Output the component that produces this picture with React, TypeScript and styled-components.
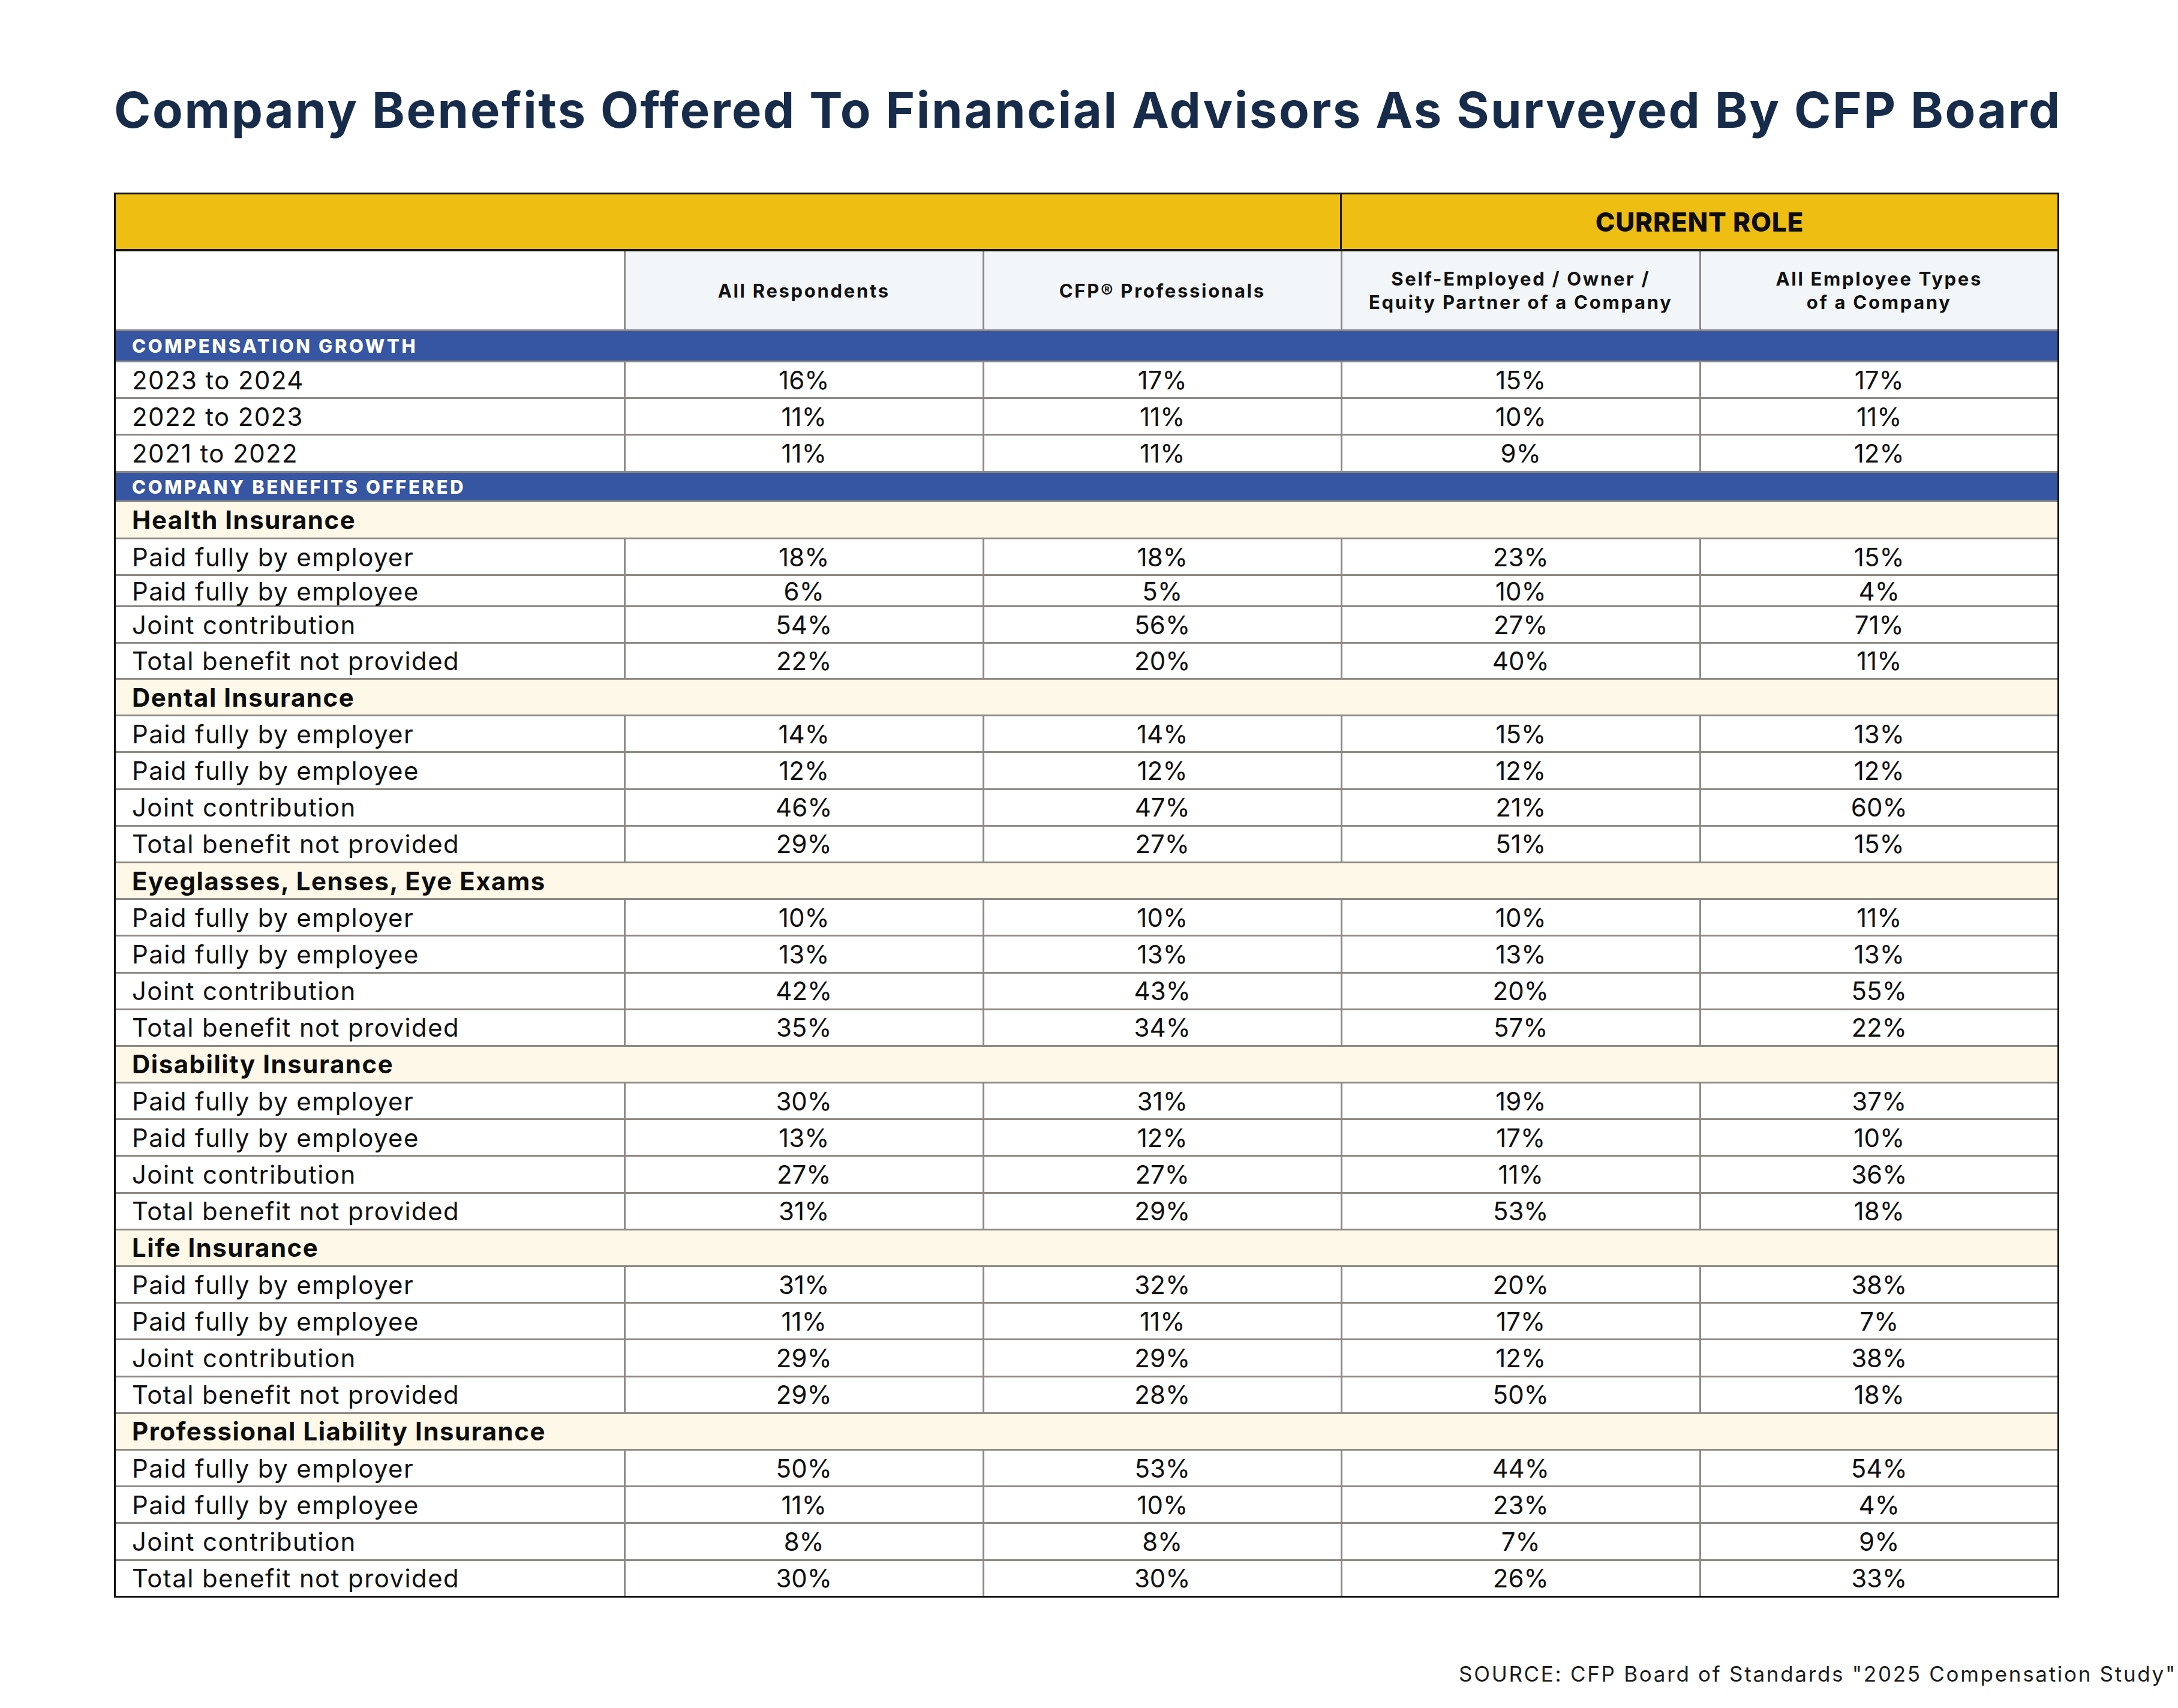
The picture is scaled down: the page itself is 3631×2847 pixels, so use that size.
import React from 'react';
import styled, { createGlobalStyle } from 'styled-components';

const GlobalStyle = createGlobalStyle`
  html, body {
    margin: 0;
    padding: 0;
    background: #ffffff;
  }
  body {
    font-family: Inter, 'Open Sans', 'Liberation Sans', sans-serif;
    color: #111111;
  }
`;

const LINE = '#8d8984';

const Page = styled.div`
  width: 3631px;
  height: 2847px;
  box-sizing: border-box;
  padding: 142px 2px 0 190px;
  display: flex;
  flex-direction: column;
`;

const Title = styled.h1`
  margin: 0 0 96px;
  font-size: 83px;
  line-height: 83px;
  font-weight: 700;
  letter-spacing: 2.6px;
  color: #172b4a;
  white-space: nowrap;
`;

const Table = styled.div`
  width: 3243px;
  box-sizing: border-box;
  border: 3px solid #111111;
`;

const RoleBand = styled.div`
  display: grid;
  grid-template-columns: 2041px 1fr;
  height: 95px;
  box-sizing: border-box;
  background: #efbe12;
  border-bottom: 4px solid #111111;
`;

const RoleCell = styled.div`
  border-left: 3px solid #1a1a1a;
  display: flex;
  align-items: center;
  justify-content: center;
  font-size: 44px;
  font-weight: 800;
  letter-spacing: 0.8px;
  color: #0d0d0d;
`;

const Grid = styled.div<{ $h: number; $top?: boolean }>`
  display: grid;
  grid-template-columns: 847px repeat(4, 1fr);
  height: ${p => p.$h}px;
  box-sizing: border-box;
  border-top: ${p => (p.$top === false ? 'none' : `3px solid ${LINE}`)};
  background: #ffffff;
`;

const HeadCell = styled.div`
  border-left: 3px solid ${LINE};
  background: #f3f6f9;
  display: flex;
  align-items: center;
  justify-content: center;
  text-align: center;
  font-size: 31px;
  line-height: 39px;
  font-weight: 700;
  letter-spacing: 2.7px;
  color: #111111;
`;

const Band = styled.div<{ $h: number }>`
  height: ${p => p.$h}px;
  box-sizing: border-box;
  border-top: 3px solid ${LINE};
  background: #3655a3;
  display: flex;
  align-items: center;
  padding-left: 27px;
  font-size: 31px;
  font-weight: 800;
  letter-spacing: 3.6px;
  color: #ffffff;
`;

const Group = styled.div<{ $h: number }>`
  height: ${p => p.$h}px;
  box-sizing: border-box;
  border-top: 3px solid ${LINE};
  background: #fdf8e7;
  display: flex;
  align-items: center;
  padding-left: 27px;
  font-size: 42px;
  font-weight: 700;
  letter-spacing: 1.5px;
  color: #0d0d0d;
`;

const Label = styled.div`
  display: flex;
  align-items: center;
  padding-left: 27px;
  font-size: 42px;
  font-weight: 400;
  letter-spacing: 1.4px;
  color: #111111;
  white-space: nowrap;
`;

const Value = styled.div`
  border-left: 3px solid ${LINE};
  display: flex;
  align-items: center;
  justify-content: center;
  font-size: 42px;
  font-weight: 400;
  color: #111111;
`;

const Source = styled.div`
  align-self: flex-end;
  margin-top: 110px;
  font-size: 35px;
  line-height: 35px;
  letter-spacing: 2.7px;
  color: #1c1c1c;
  white-space: nowrap;
`;

const columns = [
  ['All Respondents'],
  ['CFP® Professionals'],
  ['Self-Employed / Owner /', 'Equity Partner of a Company'],
  ['All Employee Types', 'of a Company'],
];

const growth: [string, string[], number][] = [
  ['2023 to 2024', ['16%', '17%', '15%', '17%'], 61],
  ['2022 to 2023', ['11%', '11%', '10%', '11%'], 61],
  ['2021 to 2022', ['11%', '11%', '9%', '12%'], 62],
];

const rowLabels = [
  'Paid fully by employer',
  'Paid fully by employee',
  'Joint contribution',
  'Total benefit not provided',
];

const benefits = [
  { title: 'Health Insurance', heights: [62, 61, 52, 61, 60], rows: [[18, 18, 23, 15], [6, 5, 10, 4], [54, 56, 27, 71], [22, 20, 40, 11]] },
  { title: 'Dental Insurance', rows: [[14, 14, 15, 13], [12, 12, 12, 12], [46, 47, 21, 60], [29, 27, 51, 15]] },
  { title: 'Eyeglasses, Lenses, Eye Exams', rows: [[10, 10, 10, 11], [13, 13, 13, 13], [42, 43, 20, 55], [35, 34, 57, 22]] },
  { title: 'Disability Insurance', rows: [[30, 31, 19, 37], [13, 12, 17, 10], [27, 27, 11, 36], [31, 29, 53, 18]] },
  { title: 'Life Insurance', rows: [[31, 32, 20, 38], [11, 11, 17, 7], [29, 29, 12, 38], [29, 28, 50, 18]] },
  { title: 'Professional Liability Insurance', rows: [[50, 53, 44, 54], [11, 10, 23, 4], [8, 8, 7, 9], [30, 30, 26, 33]] },
];

const DEFAULT_H = 61.2;

const App = () => {
  return (
    <Page>
      <GlobalStyle />
      <Title>Company Benefits Offered To Financial Advisors As Surveyed By CFP Board</Title>
      <Table>
        <RoleBand>
          <div />
          <RoleCell>CURRENT ROLE</RoleCell>
        </RoleBand>
        <Grid $h={130} $top={false}>
          <div />
          {columns.map((lines, i) => (
            <HeadCell key={i}>
              <div>
                {lines.map((l, j) => (
                  <div key={j}>{l}</div>
                ))}
              </div>
            </HeadCell>
          ))}
        </Grid>
        <Band $h={52}>COMPENSATION GROWTH</Band>
        {growth.map(([label, vals, h]) => (
          <Grid key={label} $h={h}>
            <Label>{label}</Label>
            {vals.map((v, i) => (
              <Value key={i}>{v}</Value>
            ))}
          </Grid>
        ))}
        <Band $h={49}>COMPANY BENEFITS OFFERED</Band>
        {benefits.map(group => (
          <React.Fragment key={group.title}>
            <Group $h={group.heights ? group.heights[0] : DEFAULT_H}>{group.title}</Group>
            {group.rows.map((vals, r) => (
              <Grid key={r} $h={group.heights ? group.heights[r + 1] : DEFAULT_H}>
                <Label>{rowLabels[r]}</Label>
                {vals.map((v, i) => (
                  <Value key={i}>{v}%</Value>
                ))}
              </Grid>
            ))}
          </React.Fragment>
        ))}
      </Table>
      <Source>SOURCE: CFP Board of Standards "2025 Compensation Study"</Source>
    </Page>
  );
};

export default App;
